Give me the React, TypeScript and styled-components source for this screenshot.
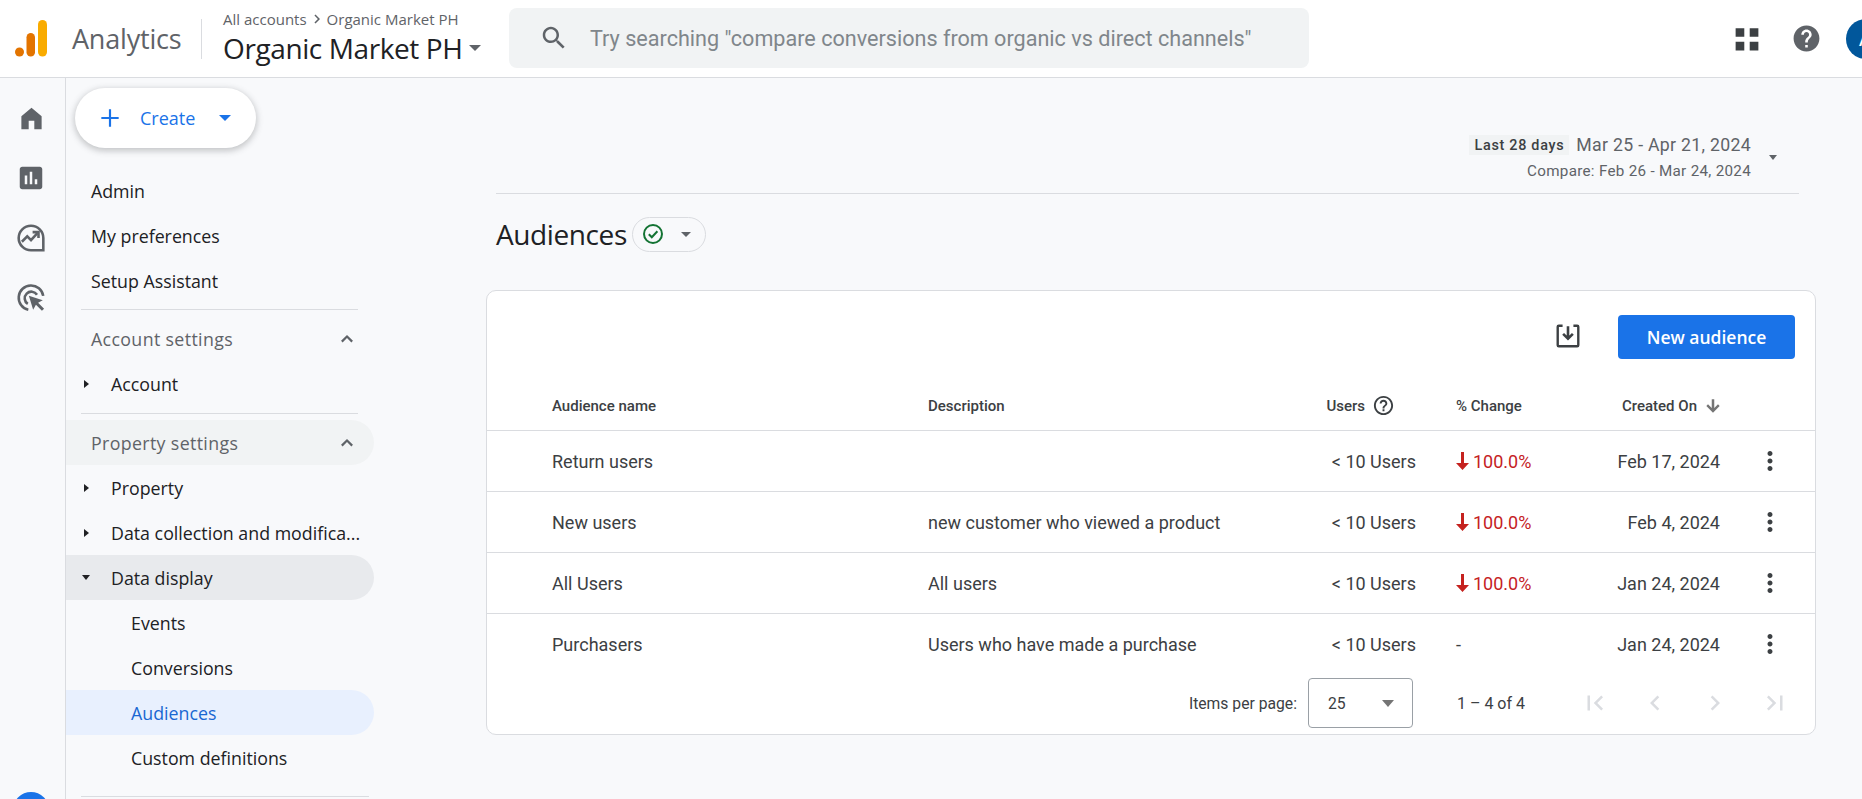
import React from "react";
import styled, { createGlobalStyle } from "styled-components";

const sans = `"Roboto", "Liberation Sans", sans-serif`;
const display = `"Open Sans", "Roboto", sans-serif`;

const GlobalStyle = createGlobalStyle`
  html, body {
    margin: 0;
    padding: 0;
    background: #f8f9fb;
    font-family: ${sans};
  }
  * {
    box-sizing: border-box;
  }
`;

const Page = styled.div`
  display: flex;
  flex-direction: column;
  width: 1862px;
  height: 799px;
  overflow: hidden;
  background: #f8f9fb;
`;

/* top bar */
const TopBar = styled.header`
  display: flex;
  align-items: center;
  flex: none;
  height: 78px;
  background: #fff;
  border-bottom: 1px solid #dadce0;
  overflow: hidden;
`;
const LogoMark = styled.svg`
  flex: none;
  margin-left: 15px;
  width: 32px;
  height: 37px;
`;
const ProductName = styled.span`
  flex: none;
  width: 110px;
  margin-left: 25px;
  font-family: ${display};
  font-size: 27px;
  letter-spacing: -0.2px;
  color: #5f6368;
`;
const HeaderDivider = styled.div`
  flex: none;
  width: 1px;
  height: 40px;
  margin: 0 21px 0 19px;
  background: #dadce0;
`;
const AccountPicker = styled.div`
  display: flex;
  flex-direction: column;
  flex: none;
  width: 264px;
  margin-top: -5px;
`;
const Breadcrumb = styled.div`
  display: flex;
  align-items: center;
  gap: 1px;
  height: 20px;
  font-family: ${display};
  font-size: 15px;
  color: #5f6368;
`;
const PropertyTitle = styled.div`
  display: flex;
  align-items: center;
  gap: 7px;
  height: 32px;
  margin-top: 3px;
  font-family: ${display};
  font-size: 28px;
  letter-spacing: -0.4px;
  color: #202124;
  white-space: nowrap;
`;
const SearchBox = styled.div`
  display: flex;
  align-items: center;
  gap: 21px;
  flex: none;
  width: 800px;
  height: 60px;
  margin: -1px 0 0 22px;
  padding-left: 30px;
  background: #f1f3f4;
  border-radius: 8px;
  font-family: ${sans};
  font-size: 21.6px;
  color: #80868b;
  white-space: nowrap;
`;
const HeaderActions = styled.div`
  display: flex;
  align-items: center;
  gap: 31px;
  margin-left: auto;
  margin-right: -24px;
`;
const Avatar = styled.div`
  display: flex;
  align-items: center;
  justify-content: center;
  width: 40px;
  height: 40px;
  margin-left: -6.5px;
  border-radius: 50%;
  background: #01579b;
  color: #fff;
  font-size: 22px;
`;

const Layout = styled.div`
  display: flex;
  flex: 1;
  min-height: 0;
`;

/* icon rail */
const Rail = styled.nav`
  display: flex;
  flex-direction: column;
  align-items: center;
  flex: none;
  width: 66px;
  padding: 10px 3px 0 0;
  border-right: 1px solid #dadce0;
  overflow: hidden;
`;
const RailItem = styled.div`
  display: flex;
  align-items: center;
  justify-content: center;
  flex: none;
  width: 100%;
  height: 60px;
  color: #5f6368;
`;
const RailBadge = styled.div`
  flex: none;
  width: 36px;
  height: 36px;
  margin-top: 464px;
  border-radius: 50%;
  background: #1a73e8;
`;

/* settings sidebar */
const Sidebar = styled.aside`
  flex: none;
  width: 310px;
  padding-top: 10px;
  overflow: hidden;
`;
const CreateButton = styled.div`
  display: flex;
  align-items: center;
  width: 181px;
  height: 60px;
  margin-left: 9px;
  margin-bottom: 20px;
  padding-left: 22px;
  border-radius: 30px;
  background: #fff;
  box-shadow: 0 2px 6px 1px rgba(60, 64, 67, 0.28);
  font-family: ${display};
  font-size: 18px;
  color: #1a73e8;
`;
const CreateLabel = styled.span`
  margin-left: 17px;
  margin-right: 24px;
`;
const NavRow = styled.div<{ $depth?: number; $tone?: "section" | "open" | "active" }>`
  display: flex;
  align-items: center;
  height: 45px;
  width: 308px;
  padding-left: ${(p) => 25 + (p.$depth ?? 0) * 20}px;
  border-radius: 0 23px 23px 0;
  font-family: ${display};
  font-size: 17.8px;
  letter-spacing: ${(p) => (p.$tone === "section" ? 0.35 : 0)}px;
  white-space: nowrap;
  color: ${(p) =>
    p.$tone === "section" ? "#5f6368" : p.$tone === "active" ? "#1967d2" : "#202124"};
  background: ${(p) =>
    p.$tone === "open" ? "#e8eaed" : p.$tone === "active" ? "#e8f0fe" : "transparent"};
`;
const SectionRow = styled(NavRow)<{ $shaded?: boolean }>`
  justify-content: space-between;
  padding-right: 16px;
  background: ${(p) => (p.$shaded ? "#f1f3f4" : "transparent")};
`;
const TreeToggle = styled.span`
  display: flex;
  align-items: center;
  justify-content: center;
  flex: none;
  width: 20px;
  margin-left: -15px;
  margin-right: 15px;
`;
const NavDivider = styled.div<{ $wide?: boolean; $before?: number; $after?: number }>`
  width: ${(p) => (p.$wide ? 288 : 277)}px;
  height: 1px;
  margin: ${(p) => p.$before ?? 6}px 0 ${(p) => p.$after ?? 6}px 15px;
  background: #dadce0;
`;

/* main column */
const Main = styled.main`
  flex: 1;
  min-width: 0;
  padding-left: 110px;
`;
const DateStrip = styled.div`
  display: flex;
  justify-content: flex-end;
  width: 1303px;
  height: 116px;
  margin-left: 10px;
  padding: 55px 22px 0 0;
  border-bottom: 1px solid #dadce0;
`;
const DateBlock = styled.div`
  display: flex;
  flex-direction: column;
  align-items: flex-end;
`;
const DateLine = styled.div`
  display: flex;
  align-items: center;
  gap: 7px;
  height: 24px;
`;
const RangeChip = styled.span`
  display: flex;
  align-items: center;
  height: 20px;
  padding: 0 5px;
  background: #f1f3f4;
  font-size: 14.4px;
  font-weight: 500;
  letter-spacing: 0.7px;
  color: #3c4043;
`;
const RangeText = styled.span`
  font-size: 17.7px;
  letter-spacing: 0.3px;
  color: #5f6368;
`;
const CompareText = styled.div`
  margin-top: 5px;
  font-size: 15.2px;
  letter-spacing: 0.3px;
  color: #5f6368;
`;
const DateCaret = styled.div`
  display: flex;
  margin: 22px 0 0 18px;
  height: 5px;
`;
const TitleRow = styled.div`
  display: flex;
  align-items: center;
  gap: 5px;
  height: 96px;
  margin-left: 10px;
  padding-bottom: 16px;
`;
const PageTitle = styled.h1`
  margin: 0;
  font-family: ${display};
  font-size: 28px;
  font-weight: 400;
  letter-spacing: -0.4px;
  color: #202124;
`;
const StatusChip = styled.div`
  display: flex;
  align-items: center;
  gap: 17px;
  width: 74px;
  height: 35px;
  padding-left: 9px;
  border: 1px solid #dadce0;
  border-radius: 18px;
`;

/* audiences card */
const Card = styled.section`
  width: 1330px;
  height: 445px;
  background: #fff;
  border: 1px solid #dadce0;
  border-radius: 10px;
`;
const CardToolbar = styled.div`
  display: flex;
  justify-content: flex-end;
  align-items: flex-start;
  height: 90px;
  padding: 24px 20px 0 0;
`;
const ExportButton = styled.div`
  display: flex;
  align-items: center;
  justify-content: center;
  width: 26px;
  height: 42px;
  margin-right: 37px;
`;
const PrimaryButton = styled.div`
  display: flex;
  align-items: center;
  justify-content: center;
  width: 177px;
  height: 44px;
  border-radius: 4px;
  background: #1a73e8;
  color: #fff;
  font-family: ${display};
  font-size: 17.5px;
  font-weight: 600;
`;
const TableRow = styled.div<{ $head?: boolean; $last?: boolean }>`
  display: grid;
  grid-template-columns: 376px 320px 168px 204px 100px 1fr;
  align-items: center;
  height: ${(p) => (p.$head ? 50 : p.$last ? 60 : 61)}px;
  padding-left: 65px;
  border-bottom: ${(p) => (p.$last ? "none" : "1px solid #dadce0")};
  font-size: ${(p) => (p.$head ? 15 : 18)}px;
  font-weight: ${(p) => (p.$head ? 500 : 400)};
  color: #3c4043;
`;
const UsersCell = styled.div<{ $head?: boolean }>`
  display: flex;
  align-items: center;
  justify-content: flex-end;
  gap: 7px;
  padding-right: ${(p) => (p.$head ? 21 : 0)}px;
`;
const ChangeCell = styled.div<{ $down?: boolean }>`
  display: flex;
  align-items: center;
  gap: 4px;
  padding-left: 40px;
  white-space: nowrap;
  color: ${(p) => (p.$down ? "#c5221f" : "inherit")};
`;
const DateCell = styled.div<{ $head?: boolean }>`
  display: flex;
  align-items: center;
  justify-content: flex-end;
  gap: 6px;
  margin-right: ${(p) => (p.$head ? -3 : 0)}px;
  white-space: nowrap;
`;
const ActionCell = styled.div`
  display: flex;
  align-items: center;
  padding-left: 35px;
  color: #3c4043;
`;
const Pagination = styled.div`
  display: flex;
  justify-content: flex-end;
  align-items: center;
  height: 50px;
  margin-top: 4px;
  padding-right: 10px;
  font-size: 15.7px;
  color: #3c4043;
`;
const PageSizeSelect = styled.div`
  display: flex;
  align-items: center;
  justify-content: space-between;
  width: 105px;
  height: 50px;
  margin: 0 44px 0 11px;
  padding: 0 18px 0 19px;
  border: 1px solid #9aa0a6;
  border-radius: 4px;
`;
const RangeLabel = styled.span`
  margin-right: 40px;
  font-size: 16px;
`;
const PagerButton = styled.div`
  display: flex;
  align-items: center;
  justify-content: center;
  width: 60px;
  color: #dadce0;
`;
const Caret = styled.span<{ $w: number; $h: number; $color: string; $dir?: "down" | "right" }>`
  display: inline-block;
  flex: none;
  width: 0;
  height: 0;
  ${(p) =>
    p.$dir === "right"
      ? `border-top: ${p.$w / 2}px solid transparent;
         border-bottom: ${p.$w / 2}px solid transparent;
         border-left: ${p.$h}px solid ${p.$color};`
      : `border-left: ${p.$w / 2}px solid transparent;
         border-right: ${p.$w / 2}px solid transparent;
         border-top: ${p.$h}px solid ${p.$color};`}
`;

const Icon = ({ d, size = 24, color = "currentColor" }: { d: string; size?: number; color?: string }) => (
  <svg width={size} height={size} viewBox="0 0 24 24" fill={color} style={{ flex: "none" }}>
    <path d={d} />
  </svg>
);

const paths = {
  search:
    "M15.5 14h-.79l-.28-.27C15.41 12.59 16 11.11 16 9.5 16 5.91 13.09 3 9.5 3S3 5.91 3 9.5 5.91 16 9.5 16c1.61 0 3.09-.59 4.23-1.57l.27.28v.79l5 4.99L20.49 19l-4.99-5zm-6 0C7.01 14 5 11.99 5 9.5S7.01 5 9.5 5 14 7.01 14 9.5 11.99 14 9.5 14z",
  help:
    "M12 2C6.48 2 2 6.48 2 12s4.48 10 10 10 10-4.48 10-10S17.52 2 12 2zm1 17h-2v-2h2v2zm2.07-7.75l-.9.92C13.45 12.9 13 13.5 13 15h-2v-.5c0-1.1.45-2.1 1.17-2.83l1.24-1.26c.37-.36.59-.86.59-1.41 0-1.1-.9-2-2-2s-2 .9-2 2H8c0-2.21 1.79-4 4-4s4 1.79 4 4c0 .88-.36 1.68-.93 2.25z",
  helpOutline:
    "M11 18h2v-2h-2v2zm1-16C6.48 2 2 6.48 2 12s4.48 10 10 10 10-4.48 10-10S17.52 2 12 2zm0 18c-4.41 0-8-3.59-8-8s3.59-8 8-8 8 3.59 8 8-3.59 8-8 8zm0-14c-2.21 0-4 1.79-4 4h2c0-1.1.9-2 2-2s2 .9 2 2c0 2-3 1.75-3 5h2c0-2.25 3-2.5 3-5 0-2.21-1.79-4-4-4z",
  more:
    "M12 8c1.1 0 2-.9 2-2s-.9-2-2-2-2 .9-2 2 .9 2 2 2zm0 2c-1.1 0-2 .9-2 2s.9 2 2 2 2-.9 2-2-.9-2-2-2zm0 6c-1.1 0-2 .9-2 2s.9 2 2 2 2-.9 2-2-.9-2-2-2z",
  arrowDown: "M20 12l-2-2-4.500 4.500V4h-3v10.500L6 10l-2 2 8 8z",
  first: "M18.41 16.59L13.82 12l4.59-4.59L17 6l-6 6 6 6zM6 6h2v12H6z",
  prev: "M15.41 7.41L14 6l-6 6 6 6 1.41-1.41L10.83 12z",
  next: "M10 6L8.59 7.41 13.17 12l-4.58 4.59L10 18l6-6z",
  last: "M5.59 7.41L10.18 12l-4.59 4.59L7 18l6-6-6-6zM16 6h2v12h-2z",
  chevronUp: "M12 7.500l-6.500 6.500 1.700 1.700 4.800-4.800 4.800 4.800 1.700-1.700z",
  chevronRight: "M10 6L8.59 7.41 13.17 12l-4.58 4.59L10 18l6-6z",
  plus: "M20 13h-7v7h-2v-7H4v-2h7V4h2v7h7z",
  apps: "M1.500 2h8v8h-8zM14.500 2h8v8h-8zM1.500 14.500h8v8h-8zM14.500 14.500h8v8h-8z",
  reports:
    "M19 3H5c-1.100 0-2 .9-2 2v14c0 1.100.9 2 2 2h14c1.100 0 2-.9 2-2V5c0-1.100-.9-2-2-2zM9 17H7v-7h2v7zm4 0h-2V7h2v10zm4 0h-2v-4h2v4z",
  home: "M12 2.500L3 10v11.500h6.500V14h5v7.500H21V10z",
};

const AnalyticsLogo = () => (
  <LogoMark viewBox="0 0 32 37">
    <circle cx="4.500" cy="32" r="4.500" fill="#e37400" />
    <rect x="11.500" y="13" width="8.500" height="23.500" rx="4.250" fill="#e37400" />
    <rect x="23" y="0" width="9" height="36.500" rx="4.500" fill="#f9ab00" />
  </LogoMark>
);

const ExploreIcon = () => (
  <svg width="30" height="30" viewBox="0 0 28 28" fill="none" stroke="#5f6368" strokeWidth="2.400">
    <path d="M14 2.500a11.500 11.500 0 1 0 0 23h11.500V14A11.500 11.500 0 0 0 14 2.500z" />
    <path d="M5.500 17.500l5-5 3.500 3.500 6-6.500" />
    <path d="M15.500 8.500h5.500v5.500" fill="none" />
  </svg>
);

const TargetIcon = () => (
  <svg width="30" height="30" viewBox="0 0 28 28" fill="none" stroke="#5f6368" strokeWidth="2.400">
    <path d="M11.500 25A11.500 11.500 0 1 1 25.400 12" />
    <path d="M11 19.500A6.200 6.200 0 1 1 19.600 11" />
    <path d="M12 12l4 13 2.600-4.600 5.600 5.600 2-2-5.600-5.600 4.400-2.400z" fill="#5f6368" stroke="none" />
  </svg>
);

const ExportIcon = () => (
  <svg width="26" height="26" viewBox="0 0 24 24" fill="none" stroke="#3c4043" strokeWidth="2.200">
    <path d="M7 2.500H3.500a1 1 0 0 0-1 1v17a1 1 0 0 0 1 1h17a1 1 0 0 0 1-1v-17a1 1 0 0 0-1-1H17" />
    <path d="M12 3v11M7.500 10l4.500 4.500 4.500-4.500" strokeWidth="2.400" />
  </svg>
);

const StatusIcon = () => (
  <svg width="22" height="22" viewBox="0 0 22 22" fill="none" stroke="#137333" strokeWidth="2">
    <circle cx="11" cy="11" r="9" />
    <path d="M6.800 11.200l3 3 5.600-6" />
  </svg>
);

const DownArrow = () => (
  <svg width="13" height="18" viewBox="0 0 13 18" fill="#c5221f" style={{ flex: "none" }}>
    <path d="M5 0h3v11h5l-6.500 7L0 11h5z" />
  </svg>
);

type Audience = { name: string; description: string; change: string; created: string };

const audiences: Audience[] = [
  { name: "Return users", description: "", change: "100.0%", created: "Feb 17, 2024" },
  { name: "New users", description: "new customer who viewed a product", change: "100.0%", created: "Feb 4, 2024" },
  { name: "All Users", description: "All users", change: "100.0%", created: "Jan 24, 2024" },
  { name: "Purchasers", description: "Users who have made a purchase", change: "-", created: "Jan 24, 2024" },
];

function TreeRow({ label, open, tone }: { label: string; open?: boolean; tone?: "open" }) {
  return (
    <NavRow $tone={tone}>
      <TreeToggle>
        {open ? (
          <Caret $w={9} $h={5} $color="#202124" />
        ) : (
          <Caret $w={9} $h={5} $color="#202124" $dir="right" />
        )}
      </TreeToggle>
      {label}
    </NavRow>
  );
}

function SectionHeader({ label, shaded }: { label: string; shaded?: boolean }) {
  return (
    <SectionRow $tone="section" $shaded={shaded}>
      {label}
      <Icon d={paths.chevronUp} size={22} color="#5f6368" />
    </SectionRow>
  );
}

export default function App() {
  return (
    <Page>
      <GlobalStyle />
      <TopBar>
        <AnalyticsLogo />
        <ProductName>Analytics</ProductName>
        <HeaderDivider />
        <AccountPicker>
          <Breadcrumb>
            All accounts
            <Icon d={paths.chevronRight} size={18} color="#5f6368" />
            Organic Market PH
          </Breadcrumb>
          <PropertyTitle>
            Organic Market PH
            <Caret $w={12} $h={6} $color="#5f6368" />
          </PropertyTitle>
        </AccountPicker>
        <SearchBox>
          <Icon d={paths.search} size={30} color="#5f6368" />
          Try searching "compare conversions from organic vs direct channels"
        </SearchBox>
        <HeaderActions>
          <Icon d={paths.apps} size={26} color="#3c4043" />
          <Icon d={paths.help} size={31} color="#5f6368" />
          <Avatar>A</Avatar>
        </HeaderActions>
      </TopBar>

      <Layout>
        <Rail>
          <RailItem>
            <Icon d={paths.home} size={27} />
          </RailItem>
          <RailItem>
            <Icon d={paths.reports} size={30} />
          </RailItem>
          <RailItem>
            <ExploreIcon />
          </RailItem>
          <RailItem>
            <TargetIcon />
          </RailItem>
          <RailBadge />
        </Rail>

        <Sidebar>
          <CreateButton>
            <Icon d={paths.plus} size={26} color="#1a73e8" />
            <CreateLabel>Create</CreateLabel>
            <Caret $w={12} $h={6} $color="#1a73e8" />
          </CreateButton>
          <NavRow>Admin</NavRow>
          <NavRow>My preferences</NavRow>
          <NavRow>Setup Assistant</NavRow>
          <NavDivider />
          <SectionHeader label="Account settings" />
          <TreeRow label="Account" />
          <NavDivider $before={7} />
          <SectionHeader label="Property settings" shaded />
          <TreeRow label="Property" />
          <TreeRow label="Data collection and modifica..." />
          <TreeRow label="Data display" open tone="open" />
          <NavRow $depth={2}>Events</NavRow>
          <NavRow $depth={2}>Conversions</NavRow>
          <NavRow $depth={2} $tone="active">
            Audiences
          </NavRow>
          <NavRow $depth={2}>Custom definitions</NavRow>
          <NavDivider $wide $before={16} />
        </Sidebar>

        <Main>
          <DateStrip>
            <DateBlock>
              <DateLine>
                <RangeChip>Last 28 days</RangeChip>
                <RangeText>Mar 25 - Apr 21, 2024</RangeText>
              </DateLine>
              <CompareText>Compare: Feb 26 - Mar 24, 2024</CompareText>
            </DateBlock>
            <DateCaret>
              <Caret $w={9} $h={5} $color="#5f6368" />
            </DateCaret>
          </DateStrip>

          <TitleRow>
            <PageTitle>Audiences</PageTitle>
            <StatusChip>
              <StatusIcon />
              <Caret $w={10} $h={5} $color="#5f6368" />
            </StatusChip>
          </TitleRow>

          <Card>
            <CardToolbar>
              <ExportButton>
                <ExportIcon />
              </ExportButton>
              <PrimaryButton>New audience</PrimaryButton>
            </CardToolbar>
            <TableRow $head>
              <div>Audience name</div>
              <div>Description</div>
              <UsersCell $head>
                Users
                <Icon d={paths.helpOutline} size={23} color="#3c4043" />
              </UsersCell>
              <ChangeCell>% Change</ChangeCell>
              <DateCell $head>
                Created On
                <Icon d={paths.arrowDown} size={20} color="#757575" />
              </DateCell>
              <div />
            </TableRow>
            {audiences.map((a, i) => (
              <TableRow key={a.name} $last={i === audiences.length - 1}>
                <div>{a.name}</div>
                <div>{a.description}</div>
                <UsersCell>{"< 10 Users"}</UsersCell>
                {a.change === "-" ? (
                  <ChangeCell>-</ChangeCell>
                ) : (
                  <ChangeCell $down>
                    <DownArrow />
                    {a.change}
                  </ChangeCell>
                )}
                <DateCell>{a.created}</DateCell>
                <ActionCell>
                  <Icon d={paths.more} size={30} />
                </ActionCell>
              </TableRow>
            ))}
            <Pagination>
              Items per page:
              <PageSizeSelect>
                25
                <Caret $w={13} $h={7} $color="#757575" />
              </PageSizeSelect>
              <RangeLabel>1 – 4 of 4</RangeLabel>
              {[paths.first, paths.prev, paths.next, paths.last].map((d) => (
                <PagerButton key={d}>
                  <Icon d={d} size={30} />
                </PagerButton>
              ))}
            </Pagination>
          </Card>
        </Main>
      </Layout>
    </Page>
  );
}
